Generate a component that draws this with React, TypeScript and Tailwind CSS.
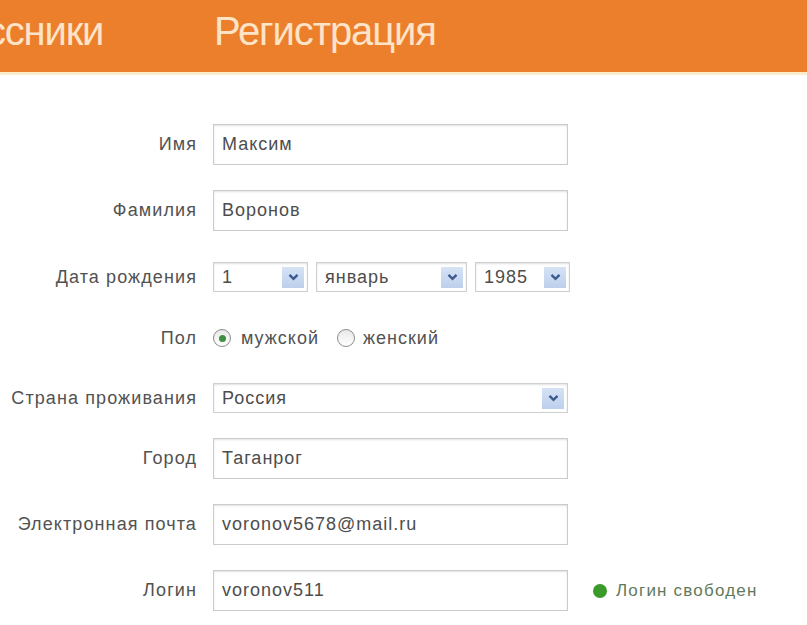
import React from "react";

const F = { fontFamily: '"Liberation Sans", Arial, sans-serif' };

function Chevron() {
  return (
    <span className="flex h-[21px] w-[22px] items-center justify-center bg-gradient-to-b from-[#d6e3f5] to-[#bccfec]">
      <svg width="11" height="8" viewBox="0 0 11 8">
        <path d="M1.5 1.8 L5.5 5.8 L9.5 1.8" fill="none" stroke="#3d5a8e" strokeWidth="2.4" />
      </svg>
    </span>
  );
}

function Select({ value, w }: { value: string; w: string }) {
  return (
    <div className={`flex h-[30px] items-center justify-between border border-[#cfcfcf] bg-white pl-[8px] pr-[3px] shadow-[inset_0_1px_2px_rgba(0,0,0,0.12)] ${w}`}>
      <span className="text-[18px] tracking-[1px] text-[#4d4d4d]">{value}</span>
      <Chevron />
    </div>
  );
}

function Input({ value }: { value: string }) {
  return (
    <div className="flex h-[41px] w-[355px] items-center border border-[#cbcbcb] bg-white pl-[8px] shadow-[inset_0_1px_2px_rgba(0,0,0,0.12)]">
      <span className="text-[18px] tracking-[1px] text-[#4d4d4d]">{value}</span>
    </div>
  );
}

function Row({ label, children, mt }: { label: string; children: React.ReactNode; mt: string }) {
  return (
    <div className={`flex items-center ${mt}`}>
      <div className="w-[197px] shrink-0 text-right text-[18px] tracking-[1.1px] text-[#525252]">{label}</div>
      <div className="ml-[16px] flex items-center">{children}</div>
    </div>
  );
}

function Radio({ checked }: { checked?: boolean }) {
  return (
    <span className="flex h-[18px] w-[18px] items-center justify-center rounded-full border border-[#8c8c8c] bg-gradient-to-b from-[#e8e8e8] to-white">
      {checked && <span className="h-[7px] w-[7px] rounded-full bg-[#3f8f3c]" />}
    </span>
  );
}

export default function App() {
  return (
    <div className="h-[625px] w-[807px] overflow-hidden bg-white" style={F}>
      <div className="flex h-[72px] items-start bg-[#ec7f2c] pt-[11px]">
        <span className="ml-[-14px] text-[40px] leading-none tracking-[-1.2px] text-[#fde4c8]">ссники</span>
        <span className="ml-[111px] text-[40px] leading-none tracking-[-1.1px] text-[#fde4c8]">Регистрация</span>
      </div>
      <div className="h-[3px] bg-[#fbeccb]" />
      <Row label="Имя" mt="mt-[49px]">
        <Input value="Максим" />
      </Row>
      <Row label="Фамилия" mt="mt-[25px]">
        <Input value="Воронов" />
      </Row>
      <Row label="Дата рождения" mt="mt-[31px]">
        <div className="flex gap-[8px]">
          <Select value="1" w="w-[95px]" />
          <Select value="январь" w="w-[151px]" />
          <Select value="1985" w="w-[95px]" />
        </div>
      </Row>
      <Row label="Пол" mt="mt-[36px] h-[20px]">
        <div className="flex items-center">
          <Radio checked />
          <span className="ml-[10px] text-[18px] tracking-[1px] text-[#525252]">мужской</span>
          <span className="ml-[18px]">
            <Radio />
          </span>
          <span className="ml-[8px] text-[18px] tracking-[1px] text-[#525252]">женский</span>
        </div>
      </Row>
      <Row label="Страна проживания" mt="mt-[35px]">
        <Select value="Россия" w="w-[355px]" />
      </Row>
      <Row label="Город" mt="mt-[25px]">
        <Input value="Таганрог" />
      </Row>
      <Row label="Электронная почта" mt="mt-[25px]">
        <Input value="voronov5678@mail.ru" />
      </Row>
      <Row label="Логин" mt="mt-[25px]">
        <Input value="voronov511" />
        <div className="ml-[25px] flex items-center">
          <span className="h-[14px] w-[14px] rounded-full bg-[#3a9a2a]" />
          <span className="ml-[9px] text-[17px] tracking-[1.2px] text-[#5f7a5a]">Логин свободен</span>
        </div>
      </Row>
    </div>
  );
}
